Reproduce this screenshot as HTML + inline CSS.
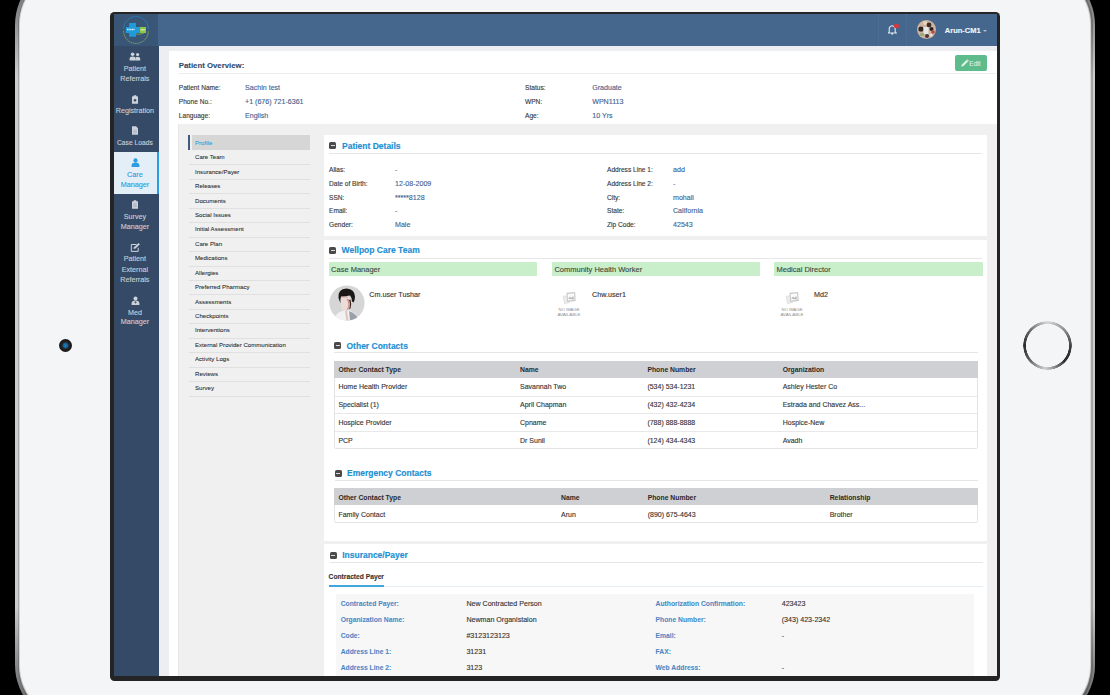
<!DOCTYPE html>
<html><head><meta charset="utf-8">
<style>
*{margin:0;padding:0;box-sizing:border-box}
html,body{width:1110px;height:695px;overflow:hidden;background:#000;font-family:"Liberation Sans",sans-serif}
.a{position:absolute}
.t{position:absolute;white-space:nowrap;line-height:10px;height:10px;-webkit-text-stroke:0.12px currentColor}
#frame{left:15px;top:-35px;width:1080px;height:760px;border-radius:60px;background:linear-gradient(to bottom,#6a6a6a 0,#8a8a8a 50px,#cdcdcd 110px,#cdcdcd 640px,#8a8a8a 700px,#5a5a5a 760px)}
#frame2{left:17.5px;top:-32.5px;width:1075px;height:755px;border-radius:57.5px;background:linear-gradient(to bottom,#5a5a5a 0,#6a6a6a 50px,#a4a4a4 110px,#a4a4a4 640px,#6a6a6a 700px,#4a4a4a 755px)}
#frame3{left:20px;top:-30px;width:1070px;height:750px;border-radius:55px;background:#f4f5f7;box-shadow:0 0 0.8px 0.5px #dcdcdc}
#bezel{left:110px;top:12px;width:890px;height:668.5px;background:#242424;border-radius:4.5px}
#screen{left:113.8px;top:14px;width:883.4px;height:662px;background:#fff;overflow:hidden}
#w{position:absolute;left:-113.8px;top:-14px;width:1110px;height:695px}
.sb{color:#c8cfd8;font-size:7.2px;text-align:center;width:46px;left:111.9px}
.lb{font-size:6.6px;color:#363636}
.vl{font-size:7.1px;color:#3f628f}
.tab{font-size:6.1px;color:#2a2a2a;left:195px;-webkit-text-stroke:0.07px currentColor}
.sep{position:absolute;left:189px;width:121px;height:1px;background:#e0e0e0}
.card{position:absolute;background:#fff}
.ttl{font-size:8.5px;font-weight:bold;color:#1d8fd3;-webkit-text-stroke:0.15px currentColor}
.mi{position:absolute;width:7px;height:7px;background:#4a4a4a;border-radius:1.6px}
.mi:after{content:"";position:absolute;left:1.5px;top:3px;width:4px;height:1px;background:#d8d8d8}
.hl{position:absolute;height:1px;background:#e6e6e6}
.grn{position:absolute;background:#c9efca;height:13.5px;border-radius:1px}
.gt{font-size:7.5px;color:#3c4a3c}
.th{position:absolute;background:#cfd0d4}
.tht{font-size:6.8px;font-weight:bold;color:#2a2a2a;-webkit-text-stroke:0}
.tdt{font-size:7px;color:#333}
.tb{position:absolute;border:1px solid #e4e4e4;border-radius:2px}
.rl{position:absolute;height:1px;background:#e8e8e8}
.il{font-size:6.75px;font-weight:bold;color:#4a86c4;-webkit-text-stroke:0.05px currentColor}
.iv{font-size:7.1px;color:#333}
</style></head><body>
<div id="frame" class="a"></div><div id="frame2" class="a"></div><div id="frame3" class="a"></div>
<div class="a" style="left:59px;top:339px;width:13px;height:13px;border-radius:50%;background:radial-gradient(circle,#1d7fc0 0,#1565a0 2px,#222 3.5px,#151515 6.5px)"></div>
<div class="a" style="left:1023px;top:321px;width:49px;height:49px;border-radius:50%;background:conic-gradient(from 0deg,#d8d8d8 0deg,#9a9a9a 40deg,#3a3a3a 95deg,#2a2a2a 130deg,#d0d0d0 185deg,#5a5a5a 235deg,#2a2a2a 270deg,#6a6a6a 310deg,#d8d8d8 360deg);-webkit-mask:radial-gradient(circle,transparent 21.2px,#000 21.8px,#000 24.1px,transparent 24.6px)"></div>
<div id="bezel" class="a"></div>
<div id="screen" class="a"><div id="w">
<div class="a" style="left:113px;top:14px;width:45px;height:32px;background:#3a5677"></div>
<div class="a" style="left:158px;top:14px;width:839px;height:32px;background:#45678d"></div>
<div class="a" style="left:113px;top:46px;width:46px;height:630px;background:#344a66"></div>
<div class="a" style="left:113px;top:152px;width:46px;height:42px;background:#e4eef7;border-right:2px solid #2a9de0"></div>
<div class="a" style="left:159px;top:46px;width:838px;height:5px;background:#edeef1"></div>
<div class="a" style="left:159px;top:46px;width:10px;height:630px;background:#edeef1"></div>
<div class="t " style="left:178.8px;top:61.30px;font-size:7.8px;font-weight:bold;color:#2f4b6d">Patient Overview:</div>
<div class="hl" style="left:178px;top:73.3px;width:818px;background:#ededed"></div>
<div class="a" style="left:955px;top:55px;width:32px;height:16px;background:#5dbb8c;border-radius:2px"></div>
<div class="t lb" style="left:178.8px;top:82.70px;">Patient Name:</div>
<div class="t vl" style="left:245px;top:82.70px;">Sachin test</div>
<div class="t lb" style="left:525px;top:82.70px;">Status:</div>
<div class="t vl" style="left:592.2px;top:82.70px;">Graduate</div>
<div class="t lb" style="left:178.8px;top:96.70px;">Phone No.:</div>
<div class="t vl" style="left:245px;top:96.70px;">+1 (676) 721-6361</div>
<div class="t lb" style="left:525px;top:96.70px;">WPN:</div>
<div class="t vl" style="left:592.2px;top:96.70px;">WPN1113</div>
<div class="t lb" style="left:178.8px;top:110.70px;">Language:</div>
<div class="t vl" style="left:245px;top:110.70px;">English</div>
<div class="t lb" style="left:525px;top:110.70px;">Age:</div>
<div class="t vl" style="left:592.2px;top:110.70px;">10 Yrs</div>
<div class="a" style="left:178px;top:124px;width:819px;height:552px;background:#f0f0f0;border-left:1px solid #e6e6e6"></div>
<div class="a" style="left:191.5px;top:135.3px;width:118.5px;height:14.5px;background:#d6d6d6"></div>
<div class="a" style="left:188px;top:135px;width:2px;height:15px;background:#3e5c80"></div>
<div class="t tab" style="left:195px;top:137.50px;color:#2f9ee0">Profile</div>
<div class="t tab" style="left:195px;top:152.20px;">Care Team</div>
<div class="sep" style="top:164.4px"></div>
<div class="t tab" style="left:195px;top:166.64px;">Insurance/Payer</div>
<div class="sep" style="top:178.9px"></div>
<div class="t tab" style="left:195px;top:181.08px;">Releases</div>
<div class="sep" style="top:193.3px"></div>
<div class="t tab" style="left:195px;top:195.52px;">Documents</div>
<div class="sep" style="top:207.8px"></div>
<div class="t tab" style="left:195px;top:209.96px;">Social Issues</div>
<div class="sep" style="top:222.2px"></div>
<div class="t tab" style="left:195px;top:224.40px;">Initial Assessment</div>
<div class="sep" style="top:236.6px"></div>
<div class="t tab" style="left:195px;top:238.84px;">Care Plan</div>
<div class="sep" style="top:251.1px"></div>
<div class="t tab" style="left:195px;top:253.28px;">Medications</div>
<div class="sep" style="top:265.5px"></div>
<div class="t tab" style="left:195px;top:267.72px;">Allergies</div>
<div class="sep" style="top:280.0px"></div>
<div class="t tab" style="left:195px;top:282.16px;">Preferred Pharmacy</div>
<div class="sep" style="top:294.4px"></div>
<div class="t tab" style="left:195px;top:296.60px;">Assessments</div>
<div class="sep" style="top:308.8px"></div>
<div class="t tab" style="left:195px;top:311.04px;">Checkpoints</div>
<div class="sep" style="top:323.3px"></div>
<div class="t tab" style="left:195px;top:325.48px;">Interventions</div>
<div class="sep" style="top:337.7px"></div>
<div class="t tab" style="left:195px;top:339.92px;">External Provider Communication</div>
<div class="sep" style="top:352.2px"></div>
<div class="t tab" style="left:195px;top:354.36px;">Activity Logs</div>
<div class="sep" style="top:366.6px"></div>
<div class="t tab" style="left:195px;top:368.80px;">Reviews</div>
<div class="sep" style="top:381.0px"></div>
<div class="t tab" style="left:195px;top:383.24px;">Survey</div>
<div class="sep" style="top:395.5px"></div>
<div class="card" style="left:324px;top:135px;width:663px;height:101px"></div>
<div class="card" style="left:324px;top:240px;width:663px;height:300.5px"></div>
<div class="card" style="left:324px;top:544px;width:663px;height:140px"></div>
<div class="mi" style="left:329px;top:142.3px"></div>
<div class="t ttl" style="left:342px;top:140.80px;">Patient Details</div>
<div class="hl" style="left:329px;top:152.5px;width:653.0px"></div>
<div class="t lb" style="left:329px;top:164.90px;">Alias:</div>
<div class="t vl" style="left:395px;top:164.90px;">-</div>
<div class="t lb" style="left:607px;top:164.90px;">Address Line 1:</div>
<div class="t vl" style="left:673px;top:164.90px;">add</div>
<div class="t lb" style="left:329px;top:178.75px;">Date of Birth:</div>
<div class="t vl" style="left:395px;top:178.75px;">12-08-2009</div>
<div class="t lb" style="left:607px;top:178.75px;">Address Line 2:</div>
<div class="t vl" style="left:673px;top:178.75px;">-</div>
<div class="t lb" style="left:329px;top:192.60px;">SSN:</div>
<div class="t vl" style="left:395px;top:192.60px;">*****8128</div>
<div class="t lb" style="left:607px;top:192.60px;">City:</div>
<div class="t vl" style="left:673px;top:192.60px;">mohali</div>
<div class="t lb" style="left:329px;top:206.45px;">Email:</div>
<div class="t vl" style="left:395px;top:206.45px;">-</div>
<div class="t lb" style="left:607px;top:206.45px;">State:</div>
<div class="t vl" style="left:673px;top:206.45px;">California</div>
<div class="t lb" style="left:329px;top:220.30px;">Gender:</div>
<div class="t vl" style="left:395px;top:220.30px;">Male</div>
<div class="t lb" style="left:607px;top:220.30px;">Zip Code:</div>
<div class="t vl" style="left:673px;top:220.30px;">42543</div>
<div class="mi" style="left:329px;top:246.5px"></div>
<div class="t ttl" style="left:341.6px;top:245.00px;">Wellpop Care Team</div>
<div class="hl" style="left:329px;top:257.5px;width:653.0px"></div>
<div class="grn" style="left:328.6px;top:262.4px;width:208.7px"></div>
<div class="t gt" style="left:331.1px;top:265.00px;">Case Manager</div>
<div class="grn" style="left:551.9px;top:262.4px;width:208.2px"></div>
<div class="t gt" style="left:554.4px;top:265.00px;">Community Health Worker</div>
<div class="grn" style="left:774px;top:262.4px;width:208.7px"></div>
<div class="t gt" style="left:776.5px;top:265.00px;">Medical Director</div>
<div class="a" style="left:329px;top:285.3px;width:36px;height:36px;line-height:0"><svg width="36" height="36" viewBox="0 0 36 36"><defs><clipPath id="cc"><circle cx="18" cy="18" r="17.6"/></clipPath>
<filter id="bl" x="-10%" y="-10%" width="120%" height="120%"><feGaussianBlur stdDeviation="0.45"/></filter></defs>
<g clip-path="url(#cc)"><rect width="36" height="36" fill="#d6d6d6"/>
<g filter="url(#bl)">
<path d="M5 36 q1-8 8-10 l5-1 q7 1 11 7 v4z" fill="#f2f2f2"/>
<path d="M20 26 q6 2 9 7 v3 h-8z" fill="#9aa0aa"/>
<path d="M9.5 13 q-1-9 8-9.5 q8 0.5 8.5 8 q0 4-1.5 6 l-1.5 -1 q0-4-2-6 q-5 1-9 1 q-1 3 0 7 q-1.5-2-2.5-5.5z" fill="#1c1818"/>
<path d="M12 12.5 q4-1 9 0 q1 6-1 11 q-3 3-7 1 q-2-5-1-12z" fill="#ecdcd6"/>
<path d="M12.5 12 q3-0.6 6 0.3" stroke="#c86a64" stroke-width="0.6" fill="none"/>
<path d="M17.5 14 q2.5 3 1.5 8 q-1 3-2 4 q3-1 3.5-5 q0.5-5-1-7z" fill="#b85a52" opacity="0.6"/>
<path d="M20 15 q2 4 0 9 l1.5-0.5 q1.5-4 0-9z" fill="#3a2626"/>
<path d="M16 26 l1.5 10 h2 l-1.5-10z" fill="#c26a64" opacity="0.35"/>
</g></g></svg></div>
<div class="t " style="left:369.3px;top:289.50px;font-size:7.2px;color:#333">Cm.user Tushar</div>
<div class="t " style="left:592px;top:289.50px;font-size:7.2px;color:#333">Chw.user1</div>
<div class="t " style="left:814px;top:289.50px;font-size:7.2px;color:#333">Md2</div>
<div class="a" style="left:562.3px;top:290.5px;width:14px;height:13px;line-height:0"><svg width="14" height="13" viewBox="0 0 14 13"><path d="M1.2 5.5 l5-1 l1.3 7 l-5 1z" fill="#ececec" stroke="#d4d4d4" stroke-width="0.6"/>
<path d="M4.5 1.8 l8.6-0.9 l0.6 9.2 l-8.6 0.9z" fill="#c9c9c9"/><path d="M5.6 2.9 l6.5-0.7 l0.4 6.6 l-6.5 0.7z" fill="#fafafa"/>
<path d="M6 7.6 l2-1.8 l1.3 1.2 l2-2 l0.5 3.4z" fill="#b5b5b5"/></svg></div>
<div class="a" style="left:557.3px;top:306.5px;width:24px;height:10px;line-height:0"><svg width="24" height="10" viewBox="0 0 24 10"><g font-family="Liberation Sans" font-size="4.2" fill="#8e8e8e" text-anchor="middle"><text x="12" y="4.3" textLength="21" lengthAdjust="spacingAndGlyphs">NO IMAGE</text><text x="12" y="9.3" textLength="23" lengthAdjust="spacingAndGlyphs">AVAILABLE</text></g></svg></div>
<div class="a" style="left:784.7px;top:290.5px;width:14px;height:13px;line-height:0"><svg width="14" height="13" viewBox="0 0 14 13"><path d="M1.2 5.5 l5-1 l1.3 7 l-5 1z" fill="#ececec" stroke="#d4d4d4" stroke-width="0.6"/>
<path d="M4.5 1.8 l8.6-0.9 l0.6 9.2 l-8.6 0.9z" fill="#c9c9c9"/><path d="M5.6 2.9 l6.5-0.7 l0.4 6.6 l-6.5 0.7z" fill="#fafafa"/>
<path d="M6 7.6 l2-1.8 l1.3 1.2 l2-2 l0.5 3.4z" fill="#b5b5b5"/></svg></div>
<div class="a" style="left:779.7px;top:306.5px;width:24px;height:10px;line-height:0"><svg width="24" height="10" viewBox="0 0 24 10"><g font-family="Liberation Sans" font-size="4.2" fill="#8e8e8e" text-anchor="middle"><text x="12" y="4.3" textLength="21" lengthAdjust="spacingAndGlyphs">NO IMAGE</text><text x="12" y="9.3" textLength="23" lengthAdjust="spacingAndGlyphs">AVAILABLE</text></g></svg></div>
<div class="mi" style="left:334px;top:342.2px"></div>
<div class="t ttl" style="left:346.5px;top:340.70px;">Other Contacts</div>
<div class="hl" style="left:334px;top:352.4px;width:644.0px"></div>
<div class="tb" style="left:333.5px;top:360.5px;width:644.5px;height:88.7px"></div>
<div class="th" style="left:333.5px;top:360.5px;width:644.5px;height:17.1px"></div>
<div class="t tht" style="left:338.4px;top:365.15px;">Other Contact Type</div>
<div class="t tht" style="left:520px;top:365.15px;">Name</div>
<div class="t tht" style="left:647.4px;top:365.15px;">Phone Number</div>
<div class="t tht" style="left:782.7px;top:365.15px;">Organization</div>
<div class="t tdt" style="left:338.4px;top:382.25px;">Home Health Provider</div>
<div class="t tdt" style="left:520px;top:382.25px;">Savannah Two</div>
<div class="t tdt" style="left:647.4px;top:382.25px;">(534) 534-1231</div>
<div class="t tdt" style="left:782.7px;top:382.25px;">Ashley Hester Co</div>
<div class="rl" style="left:334.5px;top:395.5px;width:642.5px"></div>
<div class="t tdt" style="left:338.4px;top:400.15px;">Specialist (1)</div>
<div class="t tdt" style="left:520px;top:400.15px;">April Chapman</div>
<div class="t tdt" style="left:647.4px;top:400.15px;">(432) 432-4234</div>
<div class="t tdt" style="left:782.7px;top:400.15px;">Estrada and Chavez Ass...</div>
<div class="rl" style="left:334.5px;top:413.4px;width:642.5px"></div>
<div class="t tdt" style="left:338.4px;top:418.05px;">Hospice Provider</div>
<div class="t tdt" style="left:520px;top:418.05px;">Cpname</div>
<div class="t tdt" style="left:647.4px;top:418.05px;">(788) 888-8888</div>
<div class="t tdt" style="left:782.7px;top:418.05px;">Hospice-New</div>
<div class="rl" style="left:334.5px;top:431.3px;width:642.5px"></div>
<div class="t tdt" style="left:338.4px;top:435.95px;">PCP</div>
<div class="t tdt" style="left:520px;top:435.95px;">Dr Sunil</div>
<div class="t tdt" style="left:647.4px;top:435.95px;">(124) 434-4343</div>
<div class="t tdt" style="left:782.7px;top:435.95px;">Avadh</div>
<div class="mi" style="left:334.7px;top:469.5px"></div>
<div class="t ttl" style="left:347px;top:468.00px;">Emergency Contacts</div>
<div class="hl" style="left:334.7px;top:479.7px;width:643.3px"></div>
<div class="tb" style="left:333.5px;top:487.7px;width:644.5px;height:35.2px"></div>
<div class="th" style="left:333.5px;top:487.7px;width:644.5px;height:17.4px"></div>
<div class="t tht" style="left:338.4px;top:492.50px;">Other Contact Type</div>
<div class="t tht" style="left:561px;top:492.50px;">Name</div>
<div class="t tht" style="left:647.7px;top:492.50px;">Phone Number</div>
<div class="t tht" style="left:829.7px;top:492.50px;">Relationship</div>
<div class="t tdt" style="left:338.4px;top:509.70px;">Family Contact</div>
<div class="t tdt" style="left:561px;top:509.70px;">Arun</div>
<div class="t tdt" style="left:647.7px;top:509.70px;">(890) 675-4643</div>
<div class="t tdt" style="left:829.7px;top:509.70px;">Brother</div>
<div class="mi" style="left:329.5px;top:551.5px"></div>
<div class="t ttl" style="left:342.2px;top:550.00px;">Insurance/Payer</div>
<div class="hl" style="left:329.5px;top:562.2px;width:653.1px"></div>
<div class="t " style="left:328.6px;top:571.80px;font-size:6.7px;font-weight:bold;color:#333">Contracted Payer</div>
<div class="hl" style="left:329px;top:586px;width:653.6px;background:#e3eef7"></div>
<div class="a" style="left:329px;top:585px;width:55.3px;height:2px;background:#42a5e0"></div>
<div class="a" style="left:336.4px;top:594.2px;width:638.1px;height:100px;background:#f7f7f8"></div>
<div class="t il" style="left:340.7px;top:599.40px;">Contracted Payer:</div>
<div class="t iv" style="left:466.4px;top:599.40px;">New Contracted Person</div>
<div class="t il" style="left:655.6px;top:599.40px;">Authorization Confirmation:</div>
<div class="t iv" style="left:781.7px;top:599.40px;">423423</div>
<div class="t il" style="left:340.7px;top:615.30px;">Organization Name:</div>
<div class="t iv" style="left:466.4px;top:615.30px;">Newman Organistaion</div>
<div class="t il" style="left:655.6px;top:615.30px;">Phone Number:</div>
<div class="t iv" style="left:781.7px;top:615.30px;">(343) 423-2342</div>
<div class="t il" style="left:340.7px;top:631.20px;">Code:</div>
<div class="t iv" style="left:466.4px;top:631.20px;">#3123123123</div>
<div class="t il" style="left:655.6px;top:631.20px;">Email:</div>
<div class="t iv" style="left:781.7px;top:631.20px;">-</div>
<div class="t il" style="left:340.7px;top:647.10px;">Address Line 1:</div>
<div class="t iv" style="left:466.4px;top:647.10px;">31231</div>
<div class="t il" style="left:655.6px;top:647.10px;">FAX:</div>
<div class="t iv" style="left:781.7px;top:647.10px;"></div>
<div class="t il" style="left:340.7px;top:663.00px;">Address Line 2:</div>
<div class="t iv" style="left:466.4px;top:663.00px;">3123</div>
<div class="t il" style="left:655.6px;top:663.00px;">Web Address:</div>
<div class="t iv" style="left:781.7px;top:663.00px;">-</div>
<div class="a" style="left:122px;top:16px;width:28px;height:28px;line-height:0"><svg width="28" height="28" viewBox="0 0 28 28">
<path d="M1.6 13 A12.4 12.4 0 0 1 26.4 13" fill="none" stroke="#2a8ccc" stroke-width="0.8" stroke-dasharray="1.6 0.5"/>
<path d="M1.6 15 A12.4 12.4 0 0 0 26.4 15" fill="none" stroke="#9cc04a" stroke-width="0.8" stroke-dasharray="1.4 0.6"/>
<path d="M7.2 7 h6.8 v4 h4 v6 h-4 v3.8 h-6.8 v-3.8 h-3.4 v-6 h3.4z" fill="#1e9bd9"/>
<rect x="18" y="11" width="6" height="6" fill="#8dc640"/>
<path d="M5 13.5 h8" stroke="#d6ecf8" stroke-width="1.3" stroke-dasharray="1.2 0.4"/>
<path d="M18.6 13.8 h4.6" stroke="#f0f8e0" stroke-width="1.2" stroke-dasharray="1 0.4"/>
<path d="M14 18 q4 1 8-1" stroke="#8dc640" stroke-width="0.6" fill="none"/>
</svg></div>
<div class="a" style="left:129.2px;top:52.0px;width:12px;height:9px;line-height:0"><svg width="12" height="9" viewBox="0 0 12 9"><circle cx="3.6" cy="2.3" r="1.8" fill="#cdd3db"/><circle cx="8.6" cy="2.5" r="1.6" fill="#cdd3db"/><path d="M0.6 8.5 v-1.8 q0-2.2 3-2.2 q3 0 3 2.2 v1.8z" fill="#cdd3db"/><path d="M6.4 8.5 v-1.8 q0-2 2.2-2 q2.6 0 2.6 2 v1.8z" fill="#cdd3db"/></svg></div>
<div class="t sb" style="top:63.6px;">Patient</div>
<div class="t sb" style="top:74.2px;">Referrals</div>
<div class="a" style="left:131.2px;top:94.5px;width:8px;height:9px;line-height:0"><svg width="8" height="9" viewBox="0 0 8 9"><rect x="1" y="1.3" width="6" height="7.5" rx="0.6" fill="#cdd3db"/><rect x="2.6" y="0.3" width="2.8" height="1.6" rx="0.4" fill="#cdd3db"/><rect x="3.3" y="4" width="1.4" height="2.6" fill="#344a66"/><rect x="2.7" y="4.6" width="2.6" height="1.4" fill="#344a66"/></svg></div>
<div class="t sb" style="top:106.3px;">Registration</div>
<div class="a" style="left:131.2px;top:125.5px;width:8px;height:9px;line-height:0"><svg width="8" height="9" viewBox="0 0 8 9"><path d="M1 0.3 h4 l2 2 v6.5 h-6z" fill="#cdd3db"/><path d="M2 4h4M2 5.5h4M2 7h4" stroke="#8a96a6" stroke-width="0.4"/></svg></div>
<div class="t sb" style="top:138.2px;"><span style="font-size:6.7px">Case Loads</span></div>
<div class="a" style="left:130.7px;top:158.1px;width:9px;height:9px;line-height:0"><svg width="9" height="9" viewBox="0 0 9 9"><circle cx="4.5" cy="2.4" r="2.1" fill="#2a9de0"/><path d="M0.6 9 v-1.6 q0-2.9 3.9-2.9 q3.9 0 3.9 2.9 v1.6z" fill="#2a9de0"/></svg></div>
<div class="t sb" style="top:169.6px;color:#2a9de0;">Care</div>
<div class="t sb" style="top:180.1px;color:#2a9de0;">Manager</div>
<div class="a" style="left:131.2px;top:200.2px;width:8px;height:9px;line-height:0"><svg width="8" height="9" viewBox="0 0 8 9"><rect x="1" y="1.3" width="6" height="7.5" rx="0.6" fill="#cdd3db"/><rect x="2.6" y="0.3" width="2.8" height="1.6" rx="0.4" fill="#cdd3db"/><path d="M2.2 3.8h3.6M2.2 5.2h3.6M2.2 6.6h3.6" stroke="#8a96a6" stroke-width="0.5"/></svg></div>
<div class="t sb" style="top:211.9px;">Survey</div>
<div class="t sb" style="top:222.3px;">Manager</div>
<div class="a" style="left:130.2px;top:242.7px;width:10px;height:9px;line-height:0"><svg width="10" height="9" viewBox="0 0 10 9"><path d="M6.5 1.5 H1.3 v6.9 h6.9 v-3.6" fill="none" stroke="#cdd3db" stroke-width="1"/><path d="M3.5 6 l0.5-1.8 l4.6-4.2 l1.3 1.3 l-4.4 4.2z" fill="#cdd3db"/></svg></div>
<div class="t sb" style="top:254.2px;">Patient</div>
<div class="t sb" style="top:265.0px;">External</div>
<div class="t sb" style="top:275.2px;">Referrals</div>
<div class="a" style="left:130.7px;top:295.5px;width:9px;height:9px;line-height:0"><svg width="9" height="9" viewBox="0 0 9 9"><circle cx="4.5" cy="2.4" r="2" fill="#cdd3db"/><path d="M0.6 9 v-1.6 q0-2.9 3.9-2.9 q3.9 0 3.9 2.9 v1.6z" fill="#cdd3db"/><path d="M3.3 6.3h2.4M4.5 5.2v2.3" stroke="#344a66" stroke-width="0.7"/></svg></div>
<div class="t sb" style="top:307.6px;">Med</div>
<div class="t sb" style="top:317.3px;">Manager</div>
<div class="a" style="left:878px;top:14px;width:0;height:32px;border-left:1px dotted #52729a"></div>
<div class="a" style="left:905.5px;top:14px;width:0;height:32px;border-left:1px dotted #52729a"></div>
<div class="a" style="left:888px;top:25px;width:9px;height:10px;line-height:0"><svg width="9" height="10" viewBox="0 0 9 10"><path d="M4.2 0.8 q-3 0.3 -3 3.4 v2.6 l-1 1.2 h8 l-1-1.2 v-2.6 q0-3.1-3-3.4z" fill="none" stroke="#dde6ef" stroke-width="1.1"/><circle cx="4.2" cy="8.8" r="1" fill="#dde6ef"/></svg></div>
<div class="a" style="left:893.6px;top:23.6px;width:5.6px;height:4.8px;background:#d9363e;border-radius:1.5px"></div>
<div class="a" style="left:916.7px;top:20.3px;width:19px;height:19px;line-height:0"><svg width="19" height="19" viewBox="0 0 19 19"><defs><clipPath id="ca"><circle cx="9.5" cy="9.5" r="9.5"/></clipPath><filter id="b2"><feGaussianBlur stdDeviation="0.6"/></filter></defs><g clip-path="url(#ca)">
<rect width="19" height="19" fill="#cdb3a0"/><g filter="url(#b2)"><circle cx="4" cy="9" r="2.6" fill="#2e2624"/><circle cx="12" cy="5" r="2.4" fill="#3a2e2a"/><circle cx="14.5" cy="9" r="2" fill="#2a2222"/><rect x="6.5" y="7" width="5" height="7" fill="#e8e6e2"/><circle cx="16" cy="12" r="1.8" fill="#b84a3a"/><rect x="3" y="13" width="4" height="3" fill="#9aab80"/><circle cx="8" cy="3" r="2" fill="#e6d4c0"/><circle cx="10" cy="16" r="2" fill="#4a3a34"/><circle cx="14" cy="15" r="1.5" fill="#e8e0d8"/></g></g></svg></div>
<div class="t " style="left:944.8px;top:25.80px;font-size:7.5px;font-weight:bold;color:#f2f5f8">Arun-CM1</div>
<div class="a" style="left:983px;top:29.5px;width:0;height:0;border-left:2px solid transparent;border-right:2px solid transparent;border-top:2.6px solid #aebdcd"></div>
<div class="a" style="left:960.5px;top:59px;width:8px;height:8px;line-height:0"><svg width="8" height="8" viewBox="0 0 8 8"><path d="M0.3 7.7 l0.6-2.2 l4.8-4.8 l1.6 1.6 l-4.8 4.8z" fill="#e2f2e8"/><path d="M6.2 0.3 l1.5 1.5" stroke="#e2f2e8" stroke-width="0.8"/></svg></div>
<div class="t " style="left:969.3px;top:59.30px;font-size:6.6px;color:#dcefe3">Edit</div>
</div></div>
</body></html>
